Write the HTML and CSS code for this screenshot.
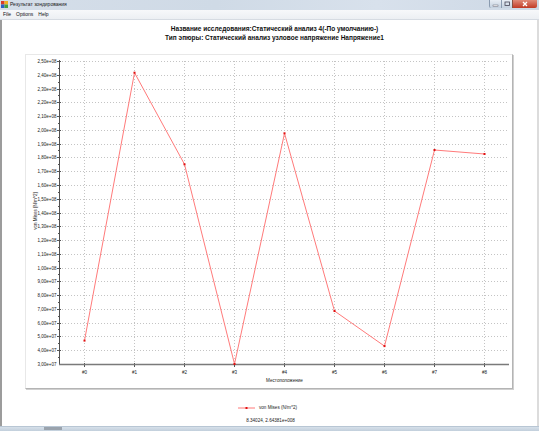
FILE: index.html
```html
<!DOCTYPE html>
<html>
<head>
<meta charset="utf-8">
<link rel="stylesheet" href="styles.css">
</head>
<body>
<div class="window">
  <div class="titlebar">
    <div class="title-left">
      <svg class="app-icon" width="7" height="7" viewBox="0 0 7 7"><rect x="0" y="0" width="3.5" height="3.5" fill="#d83a2a"/><rect x="3.5" y="0" width="3.5" height="3.5" fill="#f0b020"/><rect x="0" y="3.5" width="3.5" height="3.5" fill="#2a60c8"/><rect x="3.5" y="3.5" width="3.5" height="3.5" fill="#40a040"/></svg>
      <span class="title-text">Результат зондирования</span>
    </div>
    <div class="win-buttons">
      <div class="wbtn wmin"><svg width="11" height="8" viewBox="0 0 11 8"><rect x="3" y="5" width="5" height="1.5" fill="#fff" stroke="#445" stroke-width="0.4"/></svg></div>
      <div class="wbtn wmax"><svg width="10" height="8" viewBox="0 0 10 8"><rect x="3" y="2" width="4.5" height="3.5" fill="none" stroke="#445" stroke-width="0.8"/></svg></div>
      <div class="wbtn wclose"><svg width="24" height="8" viewBox="0 0 24 8"><path d="M10 2L14 6M14 2L10 6" stroke="#fff" stroke-width="1.3"/></svg></div>
    </div>
  </div>
  <div class="menubar">
    <span class="menu-item">File</span>
    <span class="menu-item">Options</span>
    <span class="menu-item">Help</span>
  </div>
  <div class="client">
    <div class="titles">
      <div class="title-line">Название исследования:Статический анализ 4(-По умолчанию-)</div>
      <div class="title-line">Тип эпюры: Статический анализ узловое напряжение Напряжение1</div>
    </div>
    <div class="panel">
      <svg class="chart" width="488" height="335" viewBox="25 54 488 335">
        <g class="grid">
          <path d="M59 61.5H509M59 75.5H509M59 89.5H509M59 102.5H509M59 116.5H509M59 130.5H509M59 144.5H509M59 157.5H509M59 171.5H509M59 185.5H509M59 199.5H509M59 213.5H509M59 226.5H509M59 240.5H509M59 254.5H509M59 268.5H509M59 281.5H509M59 295.5H509M59 309.5H509M59 323.5H509M59 336.5H509M59 350.5H509"/>
          <path d="M84.5 61V364M134.5 61V364M184.5 61V364M234.5 61V364M284.5 61V364M334.5 61V364M384.5 61V364M434.5 61V364M484.5 61V364"/>
        </g>
        <g class="ticks">
          <path d="M57 61.5H61M57 75.5H61M57 89.5H61M57 102.5H61M57 116.5H61M57 130.5H61M57 144.5H61M57 157.5H61M57 171.5H61M57 185.5H61M57 199.5H61M57 213.5H61M57 226.5H61M57 240.5H61M57 254.5H61M57 268.5H61M57 281.5H61M57 295.5H61M57 309.5H61M57 323.5H61M57 336.5H61M57 350.5H61"/>
          <path d="M58 68.5H60M58 82.5H60M58 95.5H60M58 109.5H60M58 123.5H60M58 137.5H60M58 150.5H60M58 164.5H60M58 178.5H60M58 192.5H60M58 206.5H60M58 219.5H60M58 233.5H60M58 247.5H60M58 261.5H60M58 274.5H60M58 288.5H60M58 302.5H60M58 316.5H60M58 329.5H60M58 343.5H60M58 357.5H60"/>
          <path d="M84.5 363V367M134.5 363V367M184.5 363V367M234.5 363V367M284.5 363V367M334.5 363V367M384.5 363V367M434.5 363V367M484.5 363V367"/>
        </g>
        <path class="y-axis" d="M59.5 60V365"/>
        <path class="x-axis" d="M59 364.5H509"/>
        <g class="ylabels" text-anchor="end">
          <text x="56.5" y="63">2,50e+08</text>
          <text x="56.5" y="77">2,40e+08</text>
          <text x="56.5" y="91">2,30e+08</text>
          <text x="56.5" y="104">2,20e+08</text>
          <text x="56.5" y="118">2,10e+08</text>
          <text x="56.5" y="132">2,00e+08</text>
          <text x="56.5" y="146">1,90e+08</text>
          <text x="56.5" y="159">1,80e+08</text>
          <text x="56.5" y="173">1,70e+08</text>
          <text x="56.5" y="187">1,60e+08</text>
          <text x="56.5" y="201">1,50e+08</text>
          <text x="56.5" y="215">1,40e+08</text>
          <text x="56.5" y="228">1,30e+08</text>
          <text x="56.5" y="242">1,20e+08</text>
          <text x="56.5" y="256">1,10e+08</text>
          <text x="56.5" y="270">1,00e+08</text>
          <text x="56.5" y="283">9,00e+07</text>
          <text x="56.5" y="297">8,00e+07</text>
          <text x="56.5" y="311">7,00e+07</text>
          <text x="56.5" y="325">6,00e+07</text>
          <text x="56.5" y="338">5,00e+07</text>
          <text x="56.5" y="352">4,00e+07</text>
          <text x="56.5" y="366">3,00e+07</text>
        </g>
        <g class="xlabels" text-anchor="middle">
          <text x="84.5" y="373.5">#0</text>
          <text x="134.5" y="373.5">#1</text>
          <text x="184.5" y="373.5">#2</text>
          <text x="234.5" y="373.5">#3</text>
          <text x="284.5" y="373.5">#4</text>
          <text x="334.5" y="373.5">#5</text>
          <text x="384.5" y="373.5">#6</text>
          <text x="434.5" y="373.5">#7</text>
          <text x="484.5" y="373.5">#8</text>
        </g>
        <text class="axis-title" x="284.5" y="382" text-anchor="middle">Местоположение</text>
        <text class="axis-title" transform="translate(36.5 211) rotate(-90)" text-anchor="middle">von Mises [N/m^2]</text>
        <polyline class="series" points="84.5,340.6 134.5,72.7 184.5,164.3 234.5,364 284.5,133.3 334.5,311 384.5,346.1 434.5,150 484.5,154"/>
        <g class="markers">
          <rect x="83.5" y="339.6" width="2" height="2"/>
          <rect x="133.5" y="71.7" width="2" height="2"/>
          <rect x="183.5" y="163.3" width="2" height="2"/>
          <rect x="233.5" y="363" width="2" height="2"/>
          <rect x="283.5" y="132.3" width="2" height="2"/>
          <rect x="333.5" y="310" width="2" height="2"/>
          <rect x="383.5" y="345.1" width="2" height="2"/>
          <rect x="433.5" y="149" width="2" height="2"/>
          <rect x="483.5" y="153" width="2" height="2"/>
        </g>
      </svg>
    </div>
    <div class="legend">
      <svg class="legend-swatch" width="17" height="4" viewBox="0 0 17 4"><path d="M0 2H17" stroke="#ff7878" stroke-width="1"/><rect x="7.5" y="1" width="2" height="2" fill="#e01010"/></svg>
      <span class="legend-text">von Mises (N/m^2)</span>
    </div>
    <div class="coords">8.34024, 2.64381e+008</div>
  </div>
  <div class="bottom-frame"><span class="bottom-block"></span></div>
</div>
</body>
</html>
```

FILE: styles.css
```css
html, body {
  margin: 0;
  padding: 0;
  background: #fff;
}

.window {
  width: 539px;
  height: 431px;
  display: flex;
  flex-direction: column;
  overflow: hidden;
  font-family: "Liberation Sans", Arial, sans-serif;
  color: #000;
}

.titlebar {
  height: 10px;
  flex: none;
  display: flex;
  justify-content: space-between;
  align-items: flex-start;
  background: linear-gradient(90deg, #d5dee9 0%, #cfdae6 40%, #d8e1ec 70%, #cdd8e5 100%);
}

.title-left {
  display: flex;
  align-items: center;
  gap: 2px;
  padding-left: 1px;
  height: 9px;
}

.app-icon {
  display: block;
}

.title-text {
  font-size: 5px;
  line-height: 9px;
  color: #1a1a1a;
}

.win-buttons {
  display: flex;
  margin-right: 2px;
  height: 8px;
}

.wbtn {
  height: 8px;
  display: flex;
  border: 0;
}

.wmin, .wmax {
  background: linear-gradient(#e8eef5, #c3d0de);
  border-left: 1px solid #8a9bb0;
}

.wmin {
  border-bottom-left-radius: 2px;
}

.wclose {
  background: linear-gradient(#e08a78, #c13a25);
  border-left: 1px solid #8a5040;
  border-bottom-right-radius: 2px;
}

.menubar {
  height: 9px;
  flex: none;
  display: flex;
  align-items: center;
  gap: 5px;
  padding-left: 3px;
  background: linear-gradient(#f7f8fa, #eceff3);
  border-bottom: 1px solid #d6dbe2;
}

.menu-item {
  font-size: 5px;
  line-height: 9px;
  color: #111;
}

.client {
  flex: 1;
  display: flex;
  flex-direction: column;
  border-left: 2px solid #9c9c9c;
  border-right: 2px solid #dcdcdc;
  background: #fff;
  min-height: 0;
}

.titles {
  padding-top: 4px;
  display: flex;
  flex-direction: column;
  align-items: center;
  padding-left: 10px;
}

.title-line {
  font-size: 6.5px;
  font-weight: bold;
  line-height: 9px;
  color: #111;
  white-space: nowrap;
}

.panel {
  margin-top: 12px;
  margin-left: 23px;
  width: 486px;
  height: 333px;
  border-top: 1px solid #e8e8e8;
  border-left: 1px solid #e8e8e8;
  border-right: 1px solid #b4b4b4;
  border-bottom: 1px solid #b4b4b4;
  box-shadow: 1px 1px 0 #d0d0d0;
  overflow: hidden;
}

.chart {
  display: block;
  margin: -1px 0 0 -1px;
  font-family: "Liberation Sans", Arial, sans-serif;
}

.grid path {
  fill: none;
  stroke: #c4c4c4;
  stroke-width: 1;
  stroke-dasharray: 1 2;
  shape-rendering: crispEdges;
}

.ticks path {
  fill: none;
  stroke: #555;
  stroke-width: 1;
  shape-rendering: crispEdges;
}

.y-axis {
  stroke: #505050;
  stroke-width: 1;
  shape-rendering: crispEdges;
}

.x-axis {
  stroke: #7a7a7a;
  stroke-width: 1.4;
}

.ylabels text, .xlabels text {
  font-size: 4.5px;
  fill: #222;
}

.axis-title {
  font-size: 4.6px;
  fill: #222;
}

.series {
  fill: none;
  stroke: #ff7a7a;
  stroke-width: 1;
}

.markers rect {
  fill: #e01010;
}

.legend {
  margin-top: 16px;
  margin-left: 236px;
  display: flex;
  align-items: center;
  gap: 4px;
  height: 6px;
}

.legend-swatch {
  display: block;
}

.legend-text {
  font-size: 4.6px;
  line-height: 6px;
  color: #222;
}

.coords {
  margin-top: 7px;
  padding-left: 2px;
  text-align: center;
  font-size: 4.6px;
  line-height: 6px;
  color: #222;
}

.bottom-frame {
  height: 4px;
  flex: none;
  background: linear-gradient(#d6e0ea, #c2cfdc);
  border-top: 1px solid #b8c6d4;
  display: flex;
  padding-left: 44px;
}

.bottom-block {
  width: 18px;
  height: 3px;
  background: #9aa3ad;
}
```
